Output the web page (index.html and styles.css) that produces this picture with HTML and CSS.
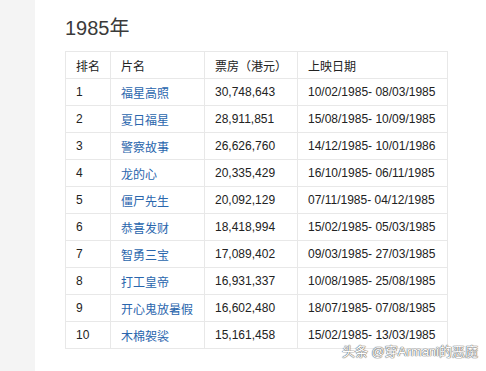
FILE: index.html
```html
<!DOCTYPE html>
<html>
<head>
<meta charset="utf-8">
<link rel="stylesheet" href="styles.css">
</head>
<body>
<div class="page">
  <div class="side"></div>
  <div class="main">
    <h2 class="title">1985年</h2>
    <table class="tbl">
      <colgroup><col class="c1"><col class="c2"><col class="c3"><col class="c4"></colgroup>
      <tr><th>排名</th><th>片名</th><th>票房（港元）</th><th>上映日期</th></tr>
      <tr><td>1</td><td><a>福星高照</a></td><td>30,748,643</td><td>10/02/1985- 08/03/1985</td></tr>
      <tr><td>2</td><td><a>夏日福星</a></td><td>28,911,851</td><td>15/08/1985- 10/09/1985</td></tr>
      <tr><td>3</td><td><a>警察故事</a></td><td>26,626,760</td><td>14/12/1985- 10/01/1986</td></tr>
      <tr><td>4</td><td><a>龙的心</a></td><td>20,335,429</td><td>16/10/1985- 06/11/1985</td></tr>
      <tr><td>5</td><td><a>僵尸先生</a></td><td>20,092,129</td><td>07/11/1985- 04/12/1985</td></tr>
      <tr><td>6</td><td><a>恭喜发财</a></td><td>18,418,994</td><td>15/02/1985- 05/03/1985</td></tr>
      <tr><td>7</td><td><a>智勇三宝</a></td><td>17,089,402</td><td>09/03/1985- 27/03/1985</td></tr>
      <tr><td>8</td><td><a>打工皇帝</a></td><td>16,931,337</td><td>10/08/1985- 25/08/1985</td></tr>
      <tr><td>9</td><td><a>开心鬼放暑假</a></td><td>16,602,480</td><td>18/07/1985- 07/08/1985</td></tr>
      <tr><td>10</td><td><a>木棉袈裟</a></td><td>15,161,458</td><td>15/02/1985- 13/03/1985</td></tr>
    </table>
    <div class="mark">头条 @穿Armani的恶魔</div>
  </div>
</div>
</body>
</html>
```
FILE: styles.css
```css
html, body { margin: 0; padding: 0; background: #fff; }
body { font-family: "Liberation Sans", "Noto Sans CJK SC", sans-serif; color: #333; }
.page { display: flex; height: 371px; overflow: hidden; }
.side { width: 35px; flex: none; background: #f4f4f4; }
.main { flex: 1; padding: 14px 0 0 30px; position: relative; }
.title { margin: 0 0 9px 0; font-size: 20px; font-weight: normal; line-height: 28px; color: #3a3a3a; }
.tbl { border-collapse: collapse; table-layout: fixed; width: 382px; font-size: 12px; }
.c1 { width: 45px; } .c2 { width: 94px; } .c3 { width: 93px; } .c4 { width: 150px; }
.tbl th, .tbl td { border: 1px solid #e8e8e8; height: 26px; padding: 0 0 0 10px; text-align: left; font-weight: normal; color: #222; white-space: nowrap; }
.tbl a { color: #2a66ad; }
.mark { position: absolute; left: 307px; top: 341px; font-size: 13px; color: #fff; text-shadow: 0 0 1px #666, 0 0 1px #666, 0 0 1px #666; }
```
